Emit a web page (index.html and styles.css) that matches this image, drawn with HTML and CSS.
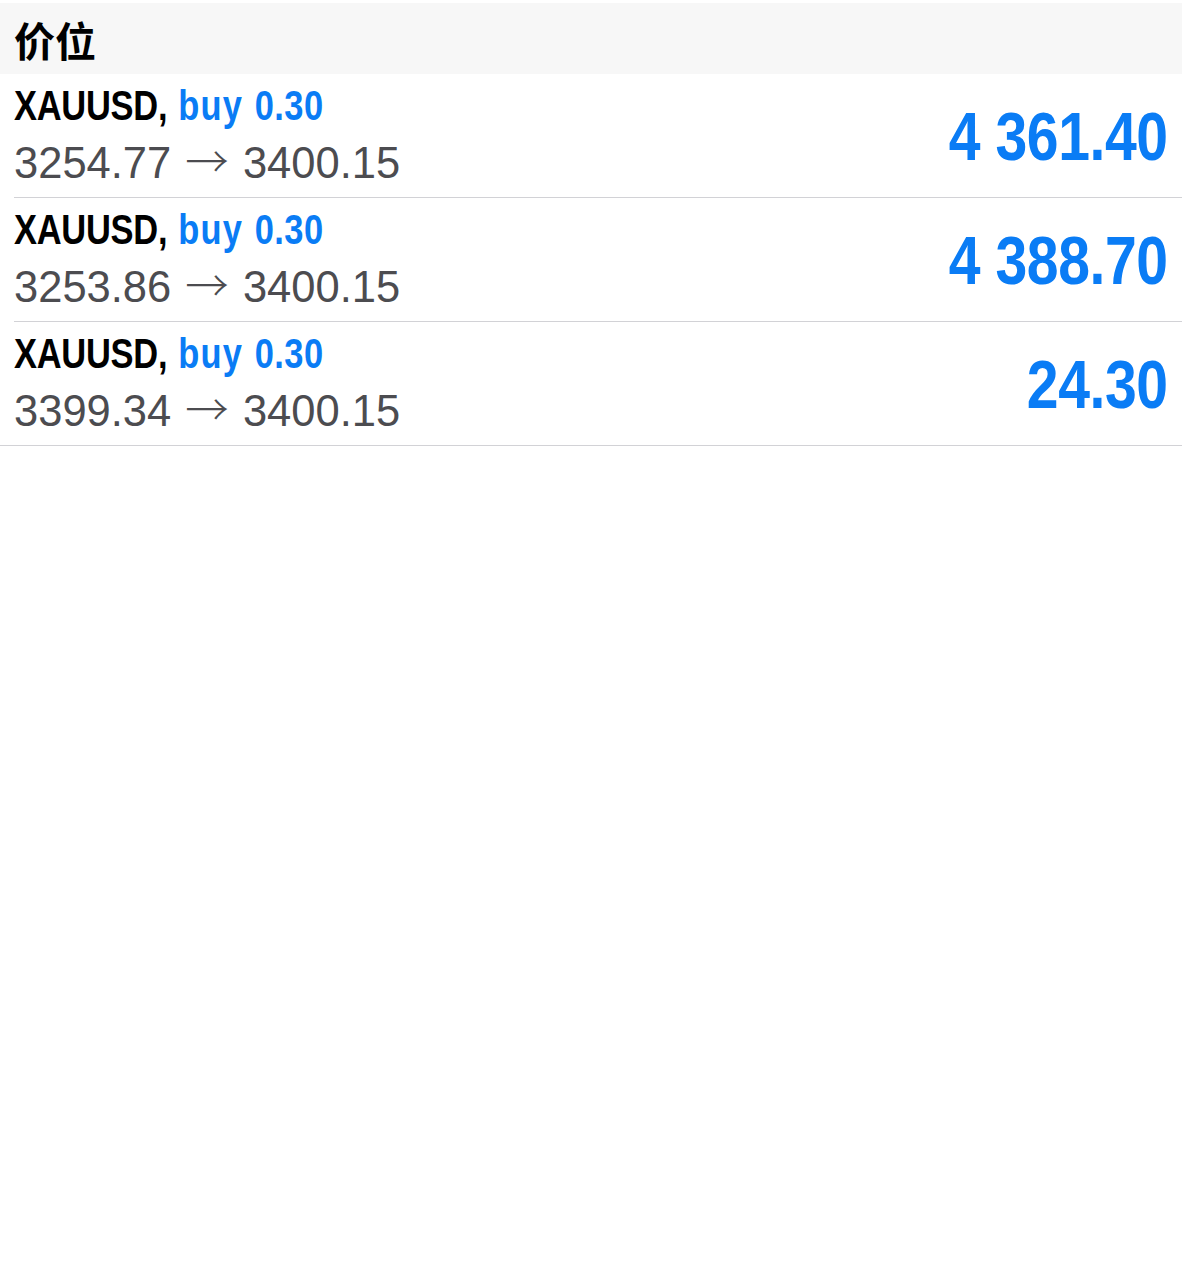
FILE: index.html
```html
<!DOCTYPE html>
<html lang="zh">
<head>
  <meta charset="UTF-8" />
  <meta name="viewport" content="width=device-width, initial-scale=1.0"/>
  <title>价位</title>
  <link rel="stylesheet" href="styles.css">
</head>
<body>

  <!-- Заголовок раздела -->
  <div class="section-header">价位</div>

  <!-- Список позиций -->
  <div class="positions">
    <div class="position">
      <div class="position-info">
        <div class="position-title">XAUUSD, <span class="position-type"><span class="side">buy</span> 0.30</span></div>
        <div class="position-prices">3254.77 <span class="arrow">→</span> 3400.15</div>
      </div>
      <div class="position-profit">4 361.40</div>
    </div>

    <div class="position">
      <div class="position-info">
        <div class="position-title">XAUUSD, <span class="position-type"><span class="side">buy</span> 0.30</span></div>
        <div class="position-prices">3253.86 <span class="arrow">→</span> 3400.15</div>
      </div>
      <div class="position-profit">4 388.70</div>
    </div>

    <div class="position">
      <div class="position-info">
        <div class="position-title">XAUUSD, <span class="position-type"><span class="side">buy</span> 0.30</span></div>
        <div class="position-prices">3399.34 <span class="arrow">→</span> 3400.15</div>
      </div>
      <div class="position-profit">24.30</div>
    </div>
  </div>

</body>
</html>
```

FILE: styles.css
```css
body {
  margin: 0;
  padding-top: 3px;
  background: #fff;
  font-family: "Liberation Sans", Arial, sans-serif;
}
.section-header {
  height: 71px;
  display: flex;
  align-items: center;
  padding-left: 14px;
  background: #f7f7f7;
  color: #000;
  font-family: "Noto Sans CJK SC", sans-serif;
  font-size: 41px;
  font-weight: 700;
}
.positions {
  border-bottom: 1px solid #d2d2d6;
}
.position {
  height: 123px;
  margin-left: 14px;
  padding-right: 14px;
  display: flex;
  align-items: center;
  justify-content: space-between;
  border-bottom: 1px solid #d2d2d6;
}
.position:last-child {
  border-bottom: none;
}
.position-info {
  display: flex;
  flex-direction: column;
  align-items: flex-start;
}
/* узкое начертание: сжимаем обычный bold по горизонтали */
.position-title {
  display: inline-block;
  font-weight: bold;
  font-size: 42px;
  line-height: 52px;
  color: #000;
  letter-spacing: -0.3px;
  word-spacing: 2px;
  transform: scaleX(0.82);
  transform-origin: left center;
  white-space: nowrap;
}
.position-type {
  color: #0a7cf5;
  letter-spacing: 0.5px;
}
.side {
  letter-spacing: 1.5px;
}
.position-prices {
  font-size: 43.5px;
  line-height: 56px;
  color: #4c4c50;
  white-space: nowrap;
}
.arrow {
  margin: 0 2px;
  font-family: "Noto Sans CJK SC", sans-serif;
  font-weight: 300;
}
.position-profit {
  font-weight: bold;
  font-size: 68px;
  color: #0a7cf5;
  letter-spacing: -0.5px;
  transform: scaleX(0.84);
  transform-origin: right center;
  white-space: nowrap;
}
```
